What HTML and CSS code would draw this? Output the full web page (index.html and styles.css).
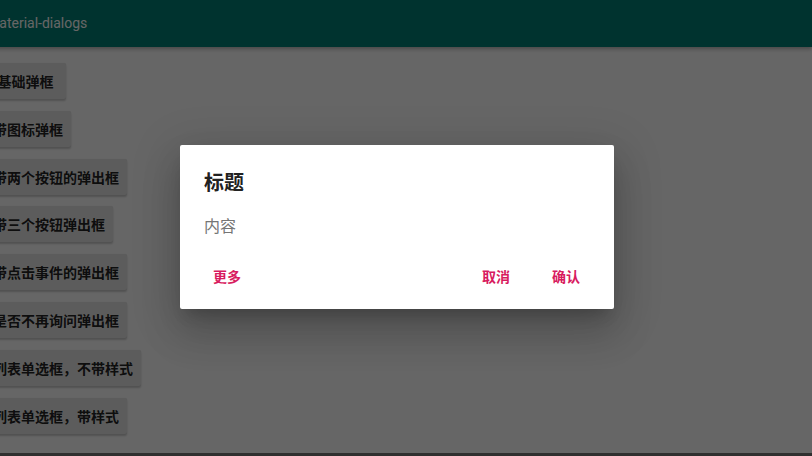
FILE: index.html
```html
<!DOCTYPE html>
<html lang="zh-CN">
<head>
  <meta charset="UTF-8">
  <meta name="viewport" content="width=device-width, initial-scale=1.0">
  <title>material-dialogs</title>
  <link rel="stylesheet" href="styles.css">
</head>
<body>
<div id="screen">
  <div class="toolbar">material-dialogs</div>
  <div class="content">
    <button class="demo-btn">基础弹框</button>
    <button class="demo-btn">带图标弹框</button>
    <button class="demo-btn">带两个按钮的弹出框</button>
    <button class="demo-btn">带三个按钮弹出框</button>
    <button class="demo-btn">带点击事件的弹出框</button>
    <button class="demo-btn">是否不再询问弹出框</button>
    <button class="demo-btn">列表单选框，不带样式</button>
    <button class="demo-btn">列表单选框，带样式</button>
  </div>

  <!-- dialog over the page -->
  <div class="scrim">
    <div class="dialog">
      <div class="dialog-title">标题</div>
      <div class="dialog-content">内容</div>
      <div class="dialog-actions">
        <button class="action-btn">更多</button>
        <span class="spacer"></span>
        <button class="action-btn">取消</button>
        <button class="action-btn action-last">确认</button>
      </div>
    </div>
  </div>
</div>
<div class="navbar"></div>
</body>
</html>
```
FILE: styles.css
```css
body {
    margin: 0;
    padding: 0;
    overflow: hidden;
    background-color: #2f2f2f;
    font-family: Roboto, "Noto Sans CJK SC", sans-serif;
}

#screen {
    position: relative;
    width: 830px;
    height: 453px;
    margin-left: -18px;
    background-color: #fff;
    display: flex;
    flex-direction: column;
    overflow: hidden;
}

.toolbar {
    height: 47px;
    line-height: 47px;
    padding-left: 5px;
    background-color: #008075;
    color: #fff;
    font-size: 14px;
    box-shadow: 0 2px 4px rgba(0, 0, 0, 0.3);
    position: relative;
    z-index: 1;
}

.content {
    display: flex;
    flex-direction: column;
    align-items: flex-start;
    padding: 16px 0 0 3px;
}

.demo-btn {
    height: 36px;
    min-width: 81px;
    margin-bottom: 11.8px;
    padding: 0 8px;
    border: none;
    border-radius: 2px;
    background-color: #e6e6e6;
    color: rgba(0, 0, 0, 0.87);
    font-family: "Noto Sans CJK SC", sans-serif;
    font-size: 14px;
    font-weight: bold;
    box-shadow: 0 2px 2px rgba(0, 0, 0, 0.2), 0 0 1px rgba(0, 0, 0, 0.15);
}

.scrim {
    position: absolute;
    left: 0;
    top: 0;
    width: 100%;
    height: 100%;
    z-index: 5;
    background-color: rgba(0, 0, 0, 0.6);
    display: flex;
    align-items: center;
    justify-content: center;
}

.dialog {
    width: 434px;
    height: 164px;
    box-sizing: border-box;
    padding-top: 24px;
    background-color: #fff;
    border-radius: 2px;
    box-shadow: 0 11px 15px -7px rgba(0, 0, 0, 0.2),
                0 24px 38px 3px rgba(0, 0, 0, 0.14),
                0 9px 46px 8px rgba(0, 0, 0, 0.12);
    display: flex;
    flex-direction: column;
}

.dialog-title {
    padding: 0 24px;
    line-height: 26px;
    font-family: "Noto Sans CJK SC", sans-serif;
    font-size: 20px;
    font-weight: bold;
    color: #212121;
}

.dialog-content {
    margin-top: 18px;
    padding: 0 24px;
    line-height: 24px;
    font-family: "Noto Sans CJK SC", sans-serif;
    font-size: 16px;
    color: #757575;
}

.dialog-actions {
    margin-top: auto;
    display: flex;
    padding: 8px 16px 15px 15px;
}

.spacer {
    flex: 1;
}

.action-btn {
    height: 36px;
    padding: 0 18px;
    border: none;
    background: none;
    color: #d81b60;
    font-family: "Noto Sans CJK SC", sans-serif;
    font-size: 14px;
    font-weight: bold;
}

.action-last {
    margin-left: 6px;
}

.navbar {
    height: 3px;
    background-color: #2f2f2f;
}
```
